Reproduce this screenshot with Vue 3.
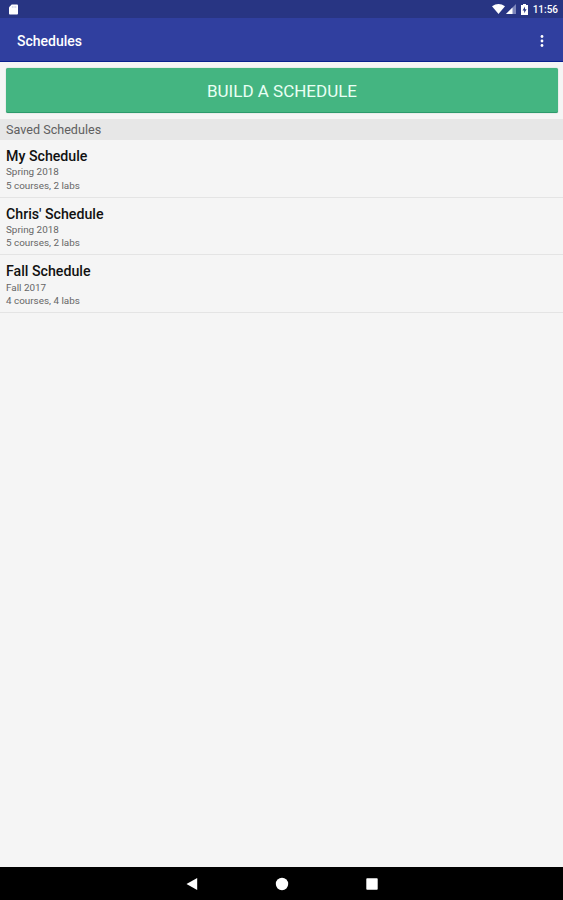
<template>
  <div class="screen">
    <div class="status-bar">
      <svg class="sd-icon" width="9" height="11" viewBox="0 0 10 11">
        <path d="M3 0h6q1 0 1 1v9q0 1-1 1H1q-1 0-1-1V3z" fill="#fff" />
        <path d="M3.7 1.7v2M5.6 1.7v2M7.5 1.7v2" stroke="#b9bfdf" stroke-width="0.8" />
      </svg>
      <div class="status-right">
        <svg class="wifi" width="13" height="10" viewBox="0 0 13 10">
          <path d="M0 2.200Q6.500-2 13 2.200L6.500 10z" fill="#fff" />
        </svg>
        <svg class="signal" width="10" height="10" viewBox="0 0 10 10">
          <path d="M10 0v10H0z" fill="#7d86bb" />
          <path d="M6.500 3.500V10H0z" fill="#fff" />
        </svg>
        <svg class="battery" width="7" height="11" viewBox="0 0 7 11">
          <path d="M2 0h3v1h2v10H0V1h2z" fill="#fff" />
          <path d="M4 2.500L1.500 6.500H3.200V9.300L5.600 5.300H4z" fill="#283583" />
        </svg>
        <span class="clock">11:56</span>
      </div>
    </div>

    <header class="app-bar">
      <h1>Schedules</h1>
      <svg class="more" width="4" height="12" viewBox="0 0 4 12">
        <circle cx="2" cy="1.500" r="1.400" />
        <circle cx="2" cy="6" r="1.400" />
        <circle cx="2" cy="10.500" r="1.400" />
      </svg>
    </header>

    <main>
      <button class="build">BUILD A SCHEDULE</button>
      <h2>Saved Schedules</h2>
      <ul>
        <li v-for="item in schedules" :key="item.name">
          <strong>{{ item.name }}</strong>
          <span>{{ item.term }}</span>
          <span>{{ item.courses }} courses, {{ item.labs }} labs</span>
        </li>
      </ul>
    </main>

    <nav>
      <svg width="12" height="14" viewBox="0 0 12 14">
        <path d="M11.200 1v12L0.500 7z" />
      </svg>
      <svg width="14" height="14" viewBox="0 0 14 14">
        <circle cx="7" cy="7" r="6.200" />
      </svg>
      <svg width="12" height="14" viewBox="0 0 12 14">
        <rect x="0.300" y="1.200" width="11.400" height="11.600" rx="0.800" />
      </svg>
    </nav>
  </div>
</template>

<script setup>
import { ref } from 'vue';

const schedules = ref([
  { name: 'My Schedule', term: 'Spring 2018', courses: 5, labs: 2 },
  { name: "Chris' Schedule", term: 'Spring 2018', courses: 5, labs: 2 },
  { name: 'Fall Schedule', term: 'Fall 2017', courses: 4, labs: 4 },
]);
</script>

<style>
body {
  margin: 0;
}
</style>

<style scoped>
.screen {
  height: 900px;
  display: flex;
  flex-direction: column;
  overflow: hidden;
  background: #f5f5f5;
  font-family: Roboto, "Liberation Sans", sans-serif;
}

.status-bar {
  height: 18px;
  flex: none;
  display: flex;
  align-items: center;
  justify-content: space-between;
  box-sizing: border-box;
  padding: 0 5px 0 9px;
  background: #283583;
}

.status-right {
  display: flex;
  align-items: center;
}

.signal {
  margin-left: 1px;
}

.battery {
  margin-left: 5px;
}

.clock {
  margin-left: 5px;
  color: #fff;
  font-size: 10px;
  font-weight: 500;
  line-height: 18px;
  padding-top: 1px;
}

.app-bar {
  height: 44px;
  flex: none;
  display: flex;
  align-items: center;
  justify-content: space-between;
  box-sizing: border-box;
  padding: 2px 19px 0 17px;
  background: #303f9f;
  border-bottom: 1px solid #09218f;
}

h1 {
  margin: 0;
  padding-top: 1px;
  color: #fff;
  font-size: 14px;
  font-weight: 500;
}

.more {
  fill: #fff;
}

main {
  flex: 1;
  display: flex;
  flex-direction: column;
}

.build {
  height: 45px;
  margin: 6px 5px 6px 6px;
  padding: 1px 0 0;
  border: none;
  border-bottom: 1px solid #2c9a6c;
  border-radius: 2px;
  background: #44b581;
  box-shadow: 0 0 1px #6f9d88;
  color: #e9fff4;
  font-family: inherit;
  font-size: 17px;
}

h2 {
  height: 21px;
  margin: 0;
  padding-left: 6px;
  background: #e7e7e7;
  color: #606060;
  font-size: 12.6px;
  font-weight: 400;
  line-height: 22px;
}

ul {
  list-style: none;
  margin: 0;
  padding: 0;
}

li {
  height: 57.6px;
  box-sizing: border-box;
  display: flex;
  flex-direction: column;
  padding: 7px 6px 0;
  border-bottom: 1px solid #e4e4e4;
}

strong {
  color: #111;
  font-size: 14.2px;
  font-weight: 500;
  line-height: 18.4px;
}

li span {
  color: #666;
  font-size: 9.9px;
  line-height: 13.4px;
}

nav {
  height: 33px;
  flex: none;
  display: flex;
  align-items: center;
  justify-content: center;
  gap: 77px;
  background: #000;
  fill: #fff;
}
</style>
